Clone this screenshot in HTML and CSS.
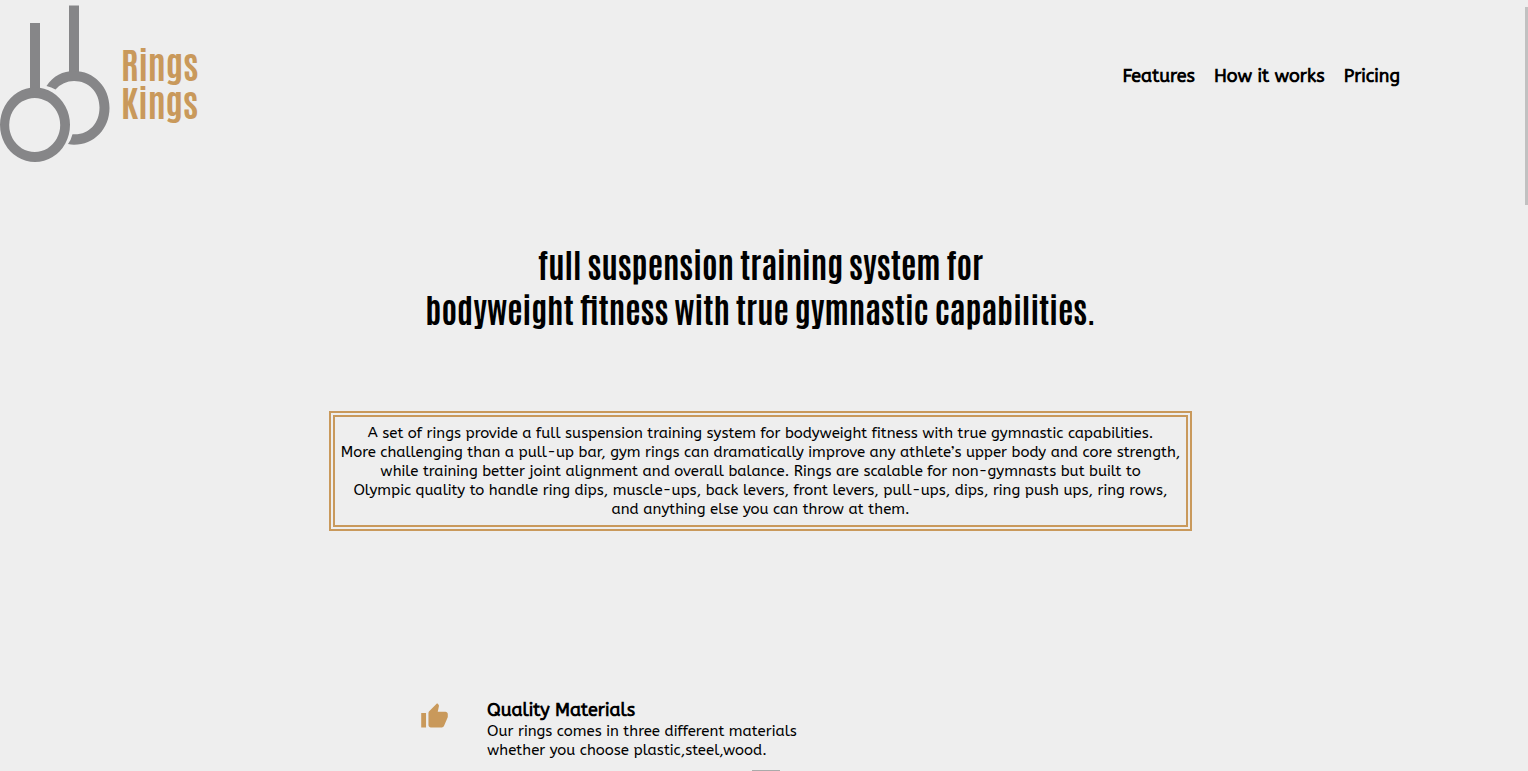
FILE: index.html
```html
<!DOCTYPE html>
<html lang="en">
<head>
<meta charset="utf-8">
<meta name="viewport" content="width=device-width, initial-scale=1">
<title>Rings Kings</title>
<link rel="stylesheet" href="styles.css">
</head>
<body>
<header class="header">
  <a class="brand" href="#top">
    <svg class="brand-mark" viewBox="0 0 110 163" aria-hidden="true">
      <g fill="#868688">
        <path d="M69 5.500h10v67H69zM30 23h10v67H30z"/>
        <path fill-rule="evenodd" d="M35 87.500a35 37.300 0 1 0 .01 0zM34.700 98a25.500 27 0 1 1-.01 0z"/>
        <path d="M46.500 86C53 76 63 71 74 71c20 0 35.500 16 35.500 37S94 144.800 74 144.800q-3 0-6-.8 3-4 4.500-9.800c16 1.300 27-10.500 27-26.700C99.500 92 88.500 81 74 81q-11 0-18.500 8.500-4-2.500-9-3.500z"/>
      </g>
    </svg>
    <span class="brand-name">Rings<br>Kings</span>
  </a>
  <nav class="nav">
    <a href="#features">Features</a>
    <a href="#how">How it works</a>
    <a href="#pricing">Pricing</a>
  </nav>
</header>
<main>
  <section class="hero">
    <h1 class="hero-title">full suspension training system for<br>bodyweight fitness with true gymnastic capabilities.</h1>
    <p class="intro">A set of rings provide a full suspension training system for bodyweight fitness with true gymnastic capabilities.<br>More challenging than a pull-up bar, gym rings can dramatically improve any athlete’s upper body and core strength,<br>while training better joint alignment and overall balance. Rings are scalable for non-gymnasts but built to<br>Olympic quality to handle ring dips, muscle-ups, back levers, front levers, pull-ups, dips, ring push ups, ring rows,<br>and anything else you can throw at them.</p>
  </section>
  <section class="features" id="features">
    <article class="feature">
      <svg class="feature-icon" viewBox="0 0 24 24" aria-hidden="true"><path fill="#c9995b" d="M1 21h4V9H1v12zm22-11c0-1.100-.9-2-2-2h-6.310l.95-4.570.03-.32c0-.41-.17-.79-.44-1.060L14.170 1 7.590 7.590C7.220 7.950 7 8.450 7 9v10c0 1.100.9 2 2 2h9c.83 0 1.540-.5 1.840-1.220l3.020-7.050c.09-.23.14-.47.14-.73v-2z"/></svg>
      <div>
        <h2 class="feature-title">Quality Materials</h2>
        <p class="feature-text">Our rings comes in three different materials<br>whether you choose plastic,steel,wood.</p>
      </div>
    </article>
  </section>
</main>
<div class="scroll-y" aria-hidden="true"></div>
<div class="scroll-x" aria-hidden="true"></div>
</body>
</html>
```

FILE: styles.css
```css
* { box-sizing: border-box; margin: 0; padding: 0; }

body {
  background: #eeeeee;
  color: #000;
  font: 15px/19px ABeeZee, "Noto Sans", sans-serif;
  overflow: hidden;
}

.header {
  display: flex;
  align-items: flex-start;
  justify-content: space-between;
  padding-right: 128px;
}

.brand {
  display: flex;
  align-items: flex-start;
  gap: 11px;
  color: #c9995b;
  text-decoration: none;
}

.brand-mark { display: block; width: 110px; }

.brand-name {
  padding-top: 44px;
  font: bold 36px/38px Antonio, "Liberation Sans Narrow", "Roboto Condensed", sans-serif;
}

.nav {
  display: flex;
  gap: 19px;
  padding-top: 64px;
  font-size: 18px;
  font-weight: 700;
  line-height: 24px;
}

.nav a { color: inherit; text-decoration: none; }

.hero {
  display: flex;
  flex-direction: column;
  align-items: center;
  gap: 80px;
  padding: 78px 7px 0 0;
  text-align: center;
}

.hero-title {
  font: bold 33px/45px Antonio, "Liberation Sans Narrow", "Roboto Condensed", sans-serif;
}

.intro {
  max-width: 864px;
  padding: 7px 6px 6px;
  border: 6px double #c9995b;
  white-space: nowrap;
}

.features { padding: 168px 420px 0; }

.feature {
  display: flex;
  align-items: flex-start;
  gap: 38px;
  white-space: nowrap;
}

.feature-icon { flex: none; width: 29px; margin-top: 3px; }

.feature-title { font-size: 18px; font-weight: 700; line-height: 23px; }

/* Scroll indicators lie over the page edges */
.scroll-y {
  position: fixed;
  top: 7px;
  right: 0;
  width: 3px;
  height: 198px;
  background: #c1c1c1;
}

.scroll-x {
  position: fixed;
  bottom: 0;
  left: 50%;
  width: 28px;
  height: 1px;
  margin-left: -12px;
  background: #aaa;
}
```
